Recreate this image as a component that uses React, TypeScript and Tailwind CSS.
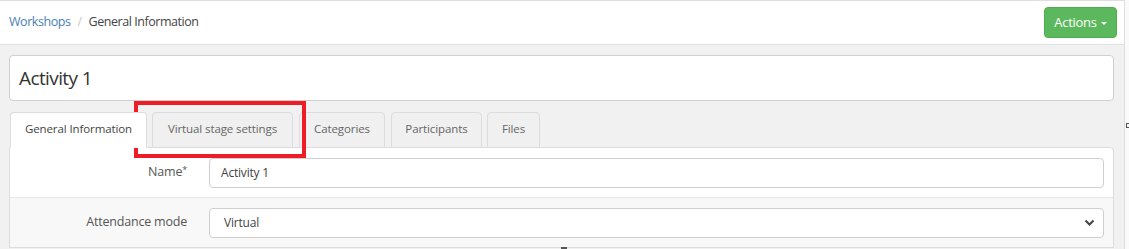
import React from "react";

const font = { fontFamily: '"Open Sans", "Noto Sans", "Liberation Sans", sans-serif' };

function Tab({ label, active, w }: { label: string; active?: boolean; w: string }) {
  return (
    <div
      className={
        "h-[36px] flex items-center justify-center rounded-t-[4px] border border-[#dcdcdc] text-[11.5px] tracking-[-0.1px] pb-[2px] " +
        w +
        (active ? " bg-white border-b-white text-[#444] relative z-10" : " bg-[#f0f0f0] text-[#666]")
      }
    >
      {label}
    </div>
  );
}

export default function App() {
  return (
    <div className="relative w-[1129px] h-[249px] overflow-hidden bg-[#fafafa]" style={font}>
      <div className="w-[1125px] h-[249px] bg-[#f1f1f1] border-t border-r border-[#dedede] flex flex-col">
        {/* header */}
        <div className="h-[44px] bg-white border-b border-[#e2e2e2] flex items-center justify-between pl-[9px] pr-[7px]">
          <div className="flex items-center text-[12.5px] leading-none tracking-[-0.45px]">
            <span className="text-[#4a7fb8]">Workshops</span>
            <span className="text-[#c8c8c8] mx-[7px]">/</span>
            <span className="text-[#444]">General Information</span>
          </div>
          <button className="w-[73px] h-[31px] rounded-[4px] bg-[#5cb85c] border border-[#4cae4c] text-white text-[13px] tracking-[-0.3px] flex items-center justify-center gap-[4px]">
            Actions
            <span className="w-0 h-0 border-l-[3px] border-r-[3px] border-t-[3px] border-l-transparent border-r-transparent border-t-white mt-[1px]" />
          </button>
        </div>

        <div className="pl-[9px] pr-[10px] pt-[10px]">
          {/* title */}
          <div className="h-[46px] bg-white border border-[#cfcfcf] rounded-[4px] flex items-center pl-[9px] text-[19px] text-[#333] tracking-[-0.6px]">
            Activity 1
          </div>

          {/* tabs */}
          <div className="flex items-end mt-[10px] pl-[1px] gap-[5px] h-[37px]">
            <Tab label="General Information" active w="w-[137px]" />
            <Tab label="Virtual stage settings" w="w-[141px]" />
            <div className="ml-[1px]">
              <Tab label="Categories" w="w-[86px]" />
            </div>
            <div className="ml-[1px]">
              <Tab label="Participants" w="w-[91px]" />
            </div>
            <Tab label="Files" w="w-[53px]" />
          </div>

          {/* panel */}
          <div className="-mt-[1px] bg-white border border-[#dcdcdc] rounded-tr-[4px] text-[12.5px] tracking-[-0.2px]">
            <div className="h-[49px] flex items-center">
              <div className="w-[179px] text-right text-[#555] pr-[2px]">
                Name<sup className="text-[9px] -top-[3px]">*</sup>
              </div>
              <div className="ml-[20px] mr-[9px] flex-1 h-[30px] border border-[#cfcfcf] rounded-[4px] bg-white flex items-center pl-[11px] text-[12px] text-[#444]">
                Activity 1
              </div>
            </div>
            <div className="h-[50px] flex items-center bg-[#f8f8f8] border-t border-[#e6e6e6]">
              <div className="w-[179px] text-right text-[#555] pr-[2px]">Attendance mode</div>
              <div className="ml-[20px] mr-[9px] flex-1 h-[30px] border border-[#cfcfcf] rounded-[4px] bg-white flex items-center justify-between pl-[14px] pr-[8px] text-[12px] text-[#444]">
                <span>Virtual</span>
                <svg width="11" height="8" viewBox="0 0 11 8">
                  <path d="M1.5 1.5 L5.5 5.5 L9.5 1.5" fill="none" stroke="#444" strokeWidth="2" />
                </svg>
              </div>
            </div>
          </div>
        </div>
      </div>

      {/* annotation box */}
      <div className="absolute left-[134px] top-[101px] w-[172px] h-[57px] border-[4px] border-[#ee1c25] pointer-events-none" />
      {/* small artifacts */}
      <div className="absolute left-[1126px] top-[123px] w-[3px] h-[5px] border border-r-0 border-[#555]" />
      <div className="absolute left-[561px] top-[247px] w-[6px] h-[2px] bg-[#555]" />
    </div>
  );
}
